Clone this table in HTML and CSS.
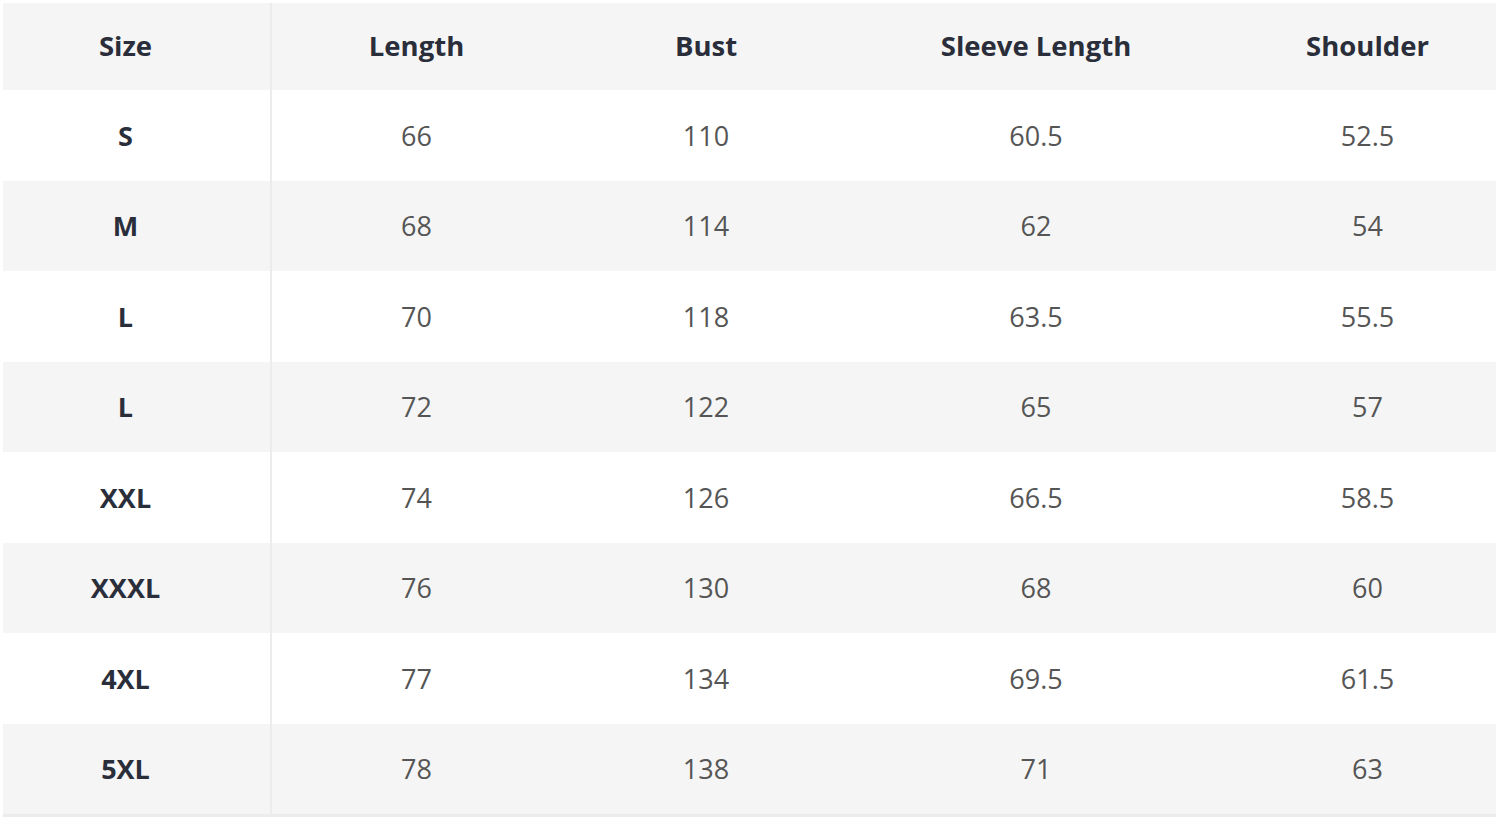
FILE: index.html
```html
<!DOCTYPE html>
<html>
<head>
<meta charset="utf-8">
<link rel="stylesheet" href="styles.css">
</head>
<body>
<table class="size-table">
  <colgroup>
    <col class="c1"><col class="c2"><col class="c3"><col class="c4"><col class="c5">
  </colgroup>
  <thead>
    <tr class="alt head"><th class="size">Size</th><th>Length</th><th>Bust</th><th>Sleeve Length</th><th class="last">Shoulder</th></tr>
  </thead>
  <tbody>
    <tr><td class="size">S</td><td>66</td><td>110</td><td>60.5</td><td class="last">52.5</td></tr>
    <tr class="alt"><td class="size">M</td><td>68</td><td>114</td><td>62</td><td class="last">54</td></tr>
    <tr><td class="size">L</td><td>70</td><td>118</td><td>63.5</td><td class="last">55.5</td></tr>
    <tr class="alt"><td class="size">L</td><td>72</td><td>122</td><td>65</td><td class="last">57</td></tr>
    <tr><td class="size">XXL</td><td>74</td><td>126</td><td>66.5</td><td class="last">58.5</td></tr>
    <tr class="alt"><td class="size">XXXL</td><td>76</td><td>130</td><td>68</td><td class="last">60</td></tr>
    <tr><td class="size">4XL</td><td>77</td><td>134</td><td>69.5</td><td class="last">61.5</td></tr>
    <tr class="alt"><td class="size">5XL</td><td>78</td><td>138</td><td>71</td><td class="last">63</td></tr>
  </tbody>
</table>
</body>
</html>
```
FILE: styles.css
```css
html, body {
  margin: 0;
  padding: 0;
  background: #ffffff;
}
body {
  padding: 3px 0 0 3px;
  font-family: "Open Sans", "Noto Sans", sans-serif;
}
.size-table {
  border-collapse: collapse;
  table-layout: fixed;
  width: 1493px;
  border-bottom: 3px solid #ececec;
}
.c1 { width: 268px; }
.c2 { width: 290px; }
.c3 { width: 290px; }
.c4 { width: 370px; }
.c5 { width: 275px; }
th, td {
  text-align: center;
  padding: 0;
  height: 90.5px;
}
.head th {
  height: 84px;
  padding-bottom: 3px;
  font-weight: 700;
  font-size: 27.5px;
  color: #2a2e3a;
}
td {
  font-size: 27px;
  color: #555555;
  font-weight: 400;
}
td.size {
  font-weight: 700;
  color: #2a2e3a;
}
.size {
  padding-right: 22px;
  border-right: 2px solid #ececec;
}
.last {
  padding-left: 18px;
}
tr.alt {
  background: #f5f5f5;
}
```
